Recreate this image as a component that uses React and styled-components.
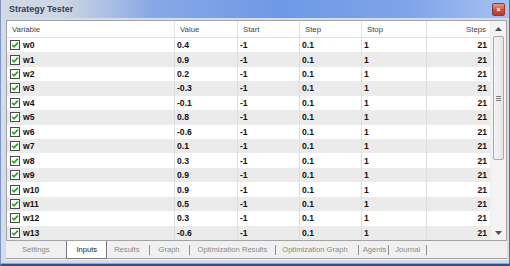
import React from "react";
import styled, { createGlobalStyle } from "styled-components";

const Global = createGlobalStyle`
  html, body { margin: 0; padding: 0; background: #ffffff; }
  body { font-family: "Liberation Sans", Arial, sans-serif; }
`;

const Window = styled.div`
  width: 510px;
  height: 266px;
  box-sizing: border-box;
  display: flex;
  flex-direction: column;
  background: #d3dce8;
  border-left: 1px solid #7d97bf;
  border-right: 1px solid #4f72aa;
  border-bottom: 2px solid #2d518e;
  overflow: hidden;
`;

const TitleBar = styled.div`
  height: 18px;
  flex: none;
  display: flex;
  align-items: center;
  justify-content: space-between;
  padding: 0 4px 0 8px;
  background: linear-gradient(
    to right,
    #d2d9e4 0%,
    #cdd6e3 12%,
    #86a8e6 30%,
    #6f99e6 55%,
    #7ea4ea 80%,
    #a7c1f0 100%
  );
`;

const Title = styled.span`
  font-size: 8.8px;
  font-weight: bold;
  color: #2c3f57;
  letter-spacing: 0.05px;
`;

const CloseButton = styled.div`
  width: 11px;
  height: 11px;
  margin-top: 1px;
  border-radius: 2px;
  border: 1px solid #8c3a33;
  background: linear-gradient(#e79a85, #c7513f 55%, #b63b2b);
  display: flex;
  align-items: center;
  justify-content: center;
  color: #fff;
  font-size: 7px;
  font-weight: bold;
  line-height: 1;
`;

const Body = styled.div`
  flex: 1;
  display: flex;
  flex-direction: column;
  padding: 2px 2px 3px 5px;
  border-bottom: 1px solid #8fa9d2;
`;

const Panel = styled.div`
  flex: 1;
  display: flex;
  flex-direction: column;
  background: #f0f0f0;
`;

const TableArea = styled.div`
  display: flex;
  border: 1px solid #a3a3a3;
  background: #ffffff;
  height: 221px;
  box-sizing: border-box;
`;

const Grid = styled.div`
  flex: 1;
  display: flex;
  flex-direction: column;
`;

const cols = "168px 63px 62px 62px 65px 1fr";

const HeaderRow = styled.div`
  display: grid;
  grid-template-columns: ${cols};
  height: 16px;
  border-bottom: 1px solid #e3e3e3;
  background: #ffffff;
`;

const HeaderCell = styled.div`
  font-size: 7.8px;
  color: #3f3f3f;
  display: flex;
  align-items: center;
  padding: 1px ${(p) => (p.$right ? "4px" : "0")} 0 ${(p) => p.$pl || 5}px;
  justify-content: ${(p) => (p.$right ? "flex-end" : "flex-start")};
  border-right: ${(p) => (p.$last ? "none" : "1px solid #e3e3e3")};
`;

const Row = styled.div`
  display: grid;
  grid-template-columns: ${cols};
  height: 14.5px;
  background: ${(p) => (p.$odd ? "#ebebeb" : "#ffffff")};
`;

const Cell = styled.div`
  font-size: 8.6px;
  font-weight: bold;
  color: #111111;
  display: flex;
  align-items: center;
  gap: 3px;
  padding: 0 ${(p) => (p.$right ? "3px" : "0")} 0 ${(p) => p.$pl || 2}px;
  justify-content: ${(p) => (p.$right ? "flex-end" : "flex-start")};
  border-right: ${(p) => (p.$last ? "none" : "1px solid #dedede")};
`;

const Scrollbar = styled.div`
  width: 15px;
  flex: none;
  display: flex;
  flex-direction: column;
  align-items: center;
  background: #f3f3f3;
  border-left: 1px solid #ececec;
`;

const Arrow = styled.div`
  height: 15px;
  width: 100%;
  display: flex;
  align-items: center;
  justify-content: center;
`;

const Track = styled.div`
  flex: 1;
  width: 100%;
  display: flex;
  flex-direction: column;
  align-items: center;
`;

const Thumb = styled.div`
  width: 11px;
  height: 124px;
  box-sizing: border-box;
  border: 1px solid #a9a9a9;
  border-radius: 2px;
  background: linear-gradient(to right, #f4f4f4, #e6e6e6);
  display: flex;
  align-items: center;
  justify-content: center;
`;

const Tabs = styled.div`
  height: 17px;
  display: flex;
  align-items: stretch;
  padding-left: 0;
  border-bottom: 1px solid #a3a3a3;
`;

const Tab = styled.div`
  font-size: 7.6px;
  color: ${(p) => (p.$active ? "#1a1a1a" : "#8a8a8a")};
  display: flex;
  align-items: center;
  justify-content: center;
  padding: 0 ${(p) => p.$pr ?? 7}px 0 ${(p) => p.$pl ?? 7}px;
  box-sizing: border-box;
  background: ${(p) => (p.$active ? "#ffffff" : "transparent")};
  border: ${(p) => (p.$active ? "1px solid #7a7a7a" : "none")};
  border-top: none;
  margin-bottom: ${(p) => (p.$active ? "-1px" : "0")};
`;

const Sep = styled.div`
  width: 1px;
  background: #8f8f8f;
  margin: 4px 0 3px;
`;

function Check() {
  return (
    <svg width="10" height="10" viewBox="0 0 10 10">
      <rect x="0.5" y="0.5" width="9" height="9" fill="#ffffff" stroke="#4a4a4a" />
      <path d="M2.2 4.8 L4 6.9 L7.9 2.6" fill="none" stroke="#1fa11f" strokeWidth="1.6" />
    </svg>
  );
}

const values = [0.4, 0.9, 0.2, -0.3, -0.1, 0.8, -0.6, 0.1, 0.3, 0.9, 0.9, 0.5, 0.3, -0.6];

export default function App() {
  return (
    <>
      <Global />
      <Window>
        <TitleBar>
          <Title>Strategy Tester</Title>
          <CloseButton>×</CloseButton>
        </TitleBar>
        <Body>
          <Panel>
            <TableArea>
              <Grid>
                <HeaderRow>
                  <HeaderCell $pl={5}>Variable</HeaderCell>
                  <HeaderCell>Value</HeaderCell>
                  <HeaderCell>Start</HeaderCell>
                  <HeaderCell>Step</HeaderCell>
                  <HeaderCell>Stop</HeaderCell>
                  <HeaderCell $right $last>Steps</HeaderCell>
                </HeaderRow>
                {values.map((v, i) => (
                  <Row key={i} $odd={i % 2 === 1}>
                    <Cell $pl={3}>
                      <Check />
                      {"w" + i}
                    </Cell>
                    <Cell>{String(v)}</Cell>
                    <Cell>-1</Cell>
                    <Cell>0.1</Cell>
                    <Cell>1</Cell>
                    <Cell $right $last>21</Cell>
                  </Row>
                ))}
              </Grid>
              <Scrollbar>
                <Arrow>
                  <svg width="7" height="4" viewBox="0 0 7 4">
                    <path d="M0 4 L3.5 0 L7 4 Z" fill="#505050" />
                  </svg>
                </Arrow>
                <Track>
                  <Thumb>
                    <svg width="5" height="5" viewBox="0 0 5 5">
                      <path d="M0 0.5 H5 M0 2.5 H5 M0 4.5 H5" stroke="#7a7a7a" strokeWidth="1" />
                    </svg>
                  </Thumb>
                </Track>
                <Arrow>
                  <svg width="7" height="4" viewBox="0 0 7 4">
                    <path d="M0 0 L3.5 4 L7 0 Z" fill="#505050" />
                  </svg>
                </Arrow>
              </Scrollbar>
            </TableArea>
            <Tabs>
              <Tab $pl={16} $pr={17}>Settings</Tab>
              <Tab $active $pl={9} $pr={9}>Inputs</Tab>
              <Tab $pl={7} $pr={10}>Results</Tab>
              <Sep />
              <Tab $pl={8} $pr={9}>Graph</Tab>
              <Sep />
              <Tab $pl={8} $pr={8}>Optimization Results</Tab>
              <Sep />
              <Tab $pl={6} $pr={10}>Optimization Graph</Tab>
              <Sep />
              <Tab $pl={4} $pr={2}>Agents</Tab>
              <Sep />
              <Tab $pl={6} $pr={6}>Journal</Tab>
              <Sep />
            </Tabs>
          </Panel>
        </Body>
      </Window>
    </>
  );
}
